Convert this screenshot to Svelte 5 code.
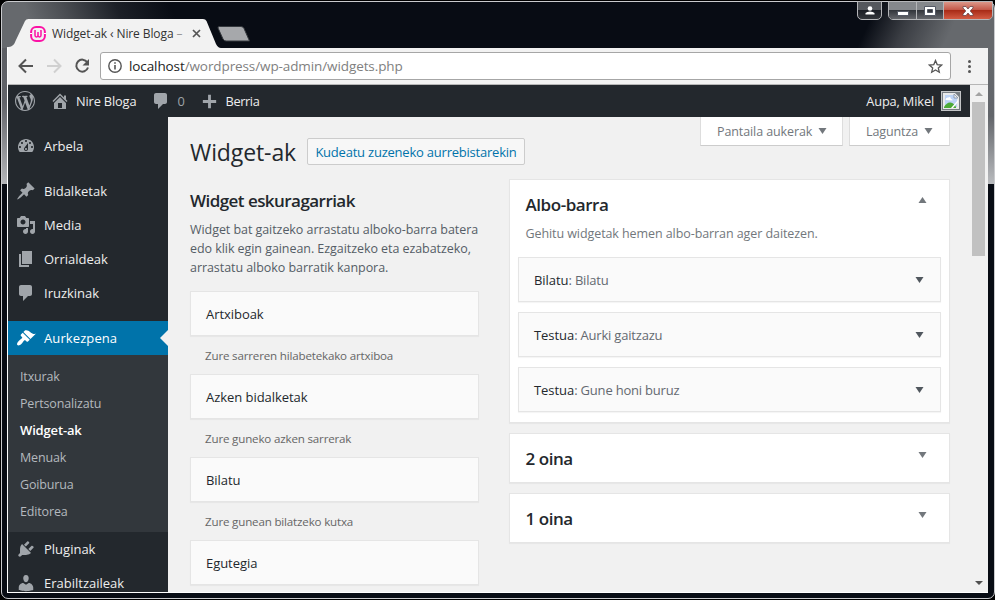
<script>
  const icons = {
    wordpress: 'M20 10c0-5.51-4.49-10-10-10C4.48 0 0 4.49 0 10c0 5.52 4.48 10 10 10 5.51 0 10-4.48 10-10zM7.78 15.37L4.37 6.22c.55-.02 1.17-.08 1.17-.08.5-.06.44-1.13-.06-1.11 0 0-1.45.11-2.37.11-.18 0-.37 0-.58-.01C4.12 2.69 6.87 1.11 10 1.11c2.33 0 4.45.87 6.05 2.34-.68-.11-1.65.39-1.65 1.58 0 .74.45 1.36.9 2.1.35.61.55 1.36.55 2.46 0 1.49-1.4 5-1.4 5l-3.03-8.37c.54-.02.82-.17.82-.17.5-.05.44-1.25-.06-1.22 0 0-1.44.12-2.38.12-.87 0-2.33-.12-2.33-.12-.5-.03-.56 1.2-.06 1.22l.92.08 1.26 3.41zM17.41 10c.24-.64.74-1.87.43-4.25.7 1.29 1.05 2.71 1.05 4.25 0 3.29-1.73 6.24-4.4 7.78.97-2.59 1.94-5.2 2.92-7.78zM6.1 18.09C3.12 16.65 1.11 13.53 1.11 10c0-1.3.23-2.48.72-3.59C3.25 10.3 4.67 14.2 6.1 18.09zm4.03-6.63l2.58 6.98c-.86.29-1.76.45-2.71.45-.79 0-1.57-.11-2.29-.33.81-2.38 1.62-4.74 2.42-7.1z',
    home: 'M16 8.5l1.53 1.53-1.06 1.06L10 4.6l-6.47 6.49-1.06-1.06L10 2.5l4 4v-2h2v4zm-6-2.46l6 5.99V18H4v-5.97zM12 17v-5H8v5h4z',
    comment: 'M5 2h9c1.1 0 2 .9 2 2v7c0 1.1-.9 2-2 2h-2l-5 5v-5H5c-1.1 0-2-.9-2-2V4c0-1.1.9-2 2-2z',
    plus: 'M17 8.5v3h-5.500v5.500h-3v-5.500H3v-3h5.500V3h3v5.500H17z',
    dashboard: 'M3.760 16h12.480c1.100-1.370 1.760-3.110 1.760-5 0-4.420-3.580-8-8-8s-8 3.580-8 8c0 1.890.66 3.630 1.760 5zM10 4c.55 0 1 .45 1 1s-.45 1-1 1-1-.45-1-1 .45-1 1-1zM6 6c.55 0 1 .45 1 1s-.45 1-1 1-1-.45-1-1 .45-1 1-1zm8 0c.55 0 1 .45 1 1s-.45 1-1 1-1-.45-1-1 .45-1 1-1zm-5.370 5.550L12 7v6c0 1.100-.9 2-2 2s-2-.9-2-2c0-.57.24-1.080.63-1.450zM4 10c.55 0 1 .45 1 1s-.45 1-1 1-1-.45-1-1 .45-1 1-1zm12 0c.55 0 1 .45 1 1s-.45 1-1 1-1-.45-1-1 .45-1 1-1zm-5 3c0-.55-.45-1-1-1s-1 .45-1 1 .45 1 1 1 1-.45 1-1z',
    pin: 'M10.440 3.020l1.820-1.820 6.360 6.350-1.830 1.820c-1.050-.68-2.480-.57-3.410.36l-.75.75c-.92.93-1.040 2.350-.35 3.410l-1.830 1.820-2.410-2.410-2.800 2.790c-.42.42-3.380 2.710-3.800 2.290s1.860-3.390 2.280-3.810l2.790-2.790L4.100 9.360l1.830-1.820c1.050.69 2.480.57 3.400-.36l.75-.75c.93-.92 1.050-2.350.36-3.410z',
    media: 'M13 11V4c0-.55-.45-1-1-1h-1.670L9 1H5L3.670 3H2c-.55 0-1 .45-1 1v7c0 .55.45 1 1 1h10c.55 0 1-.45 1-1zM7 4.500c1.380 0 2.500 1.120 2.500 2.500S8.380 9.500 7 9.500 4.500 8.380 4.500 7 5.620 4.500 7 4.500zM14 6h5v10.500c0 1.380-1.120 2.500-2.500 2.500S14 17.880 14 16.500s1.120-2.500 2.500-2.500c.17 0 .34.02.5.05V9h-3V6zm-4 8.050V13h2v3.500c0 1.380-1.120 2.500-2.500 2.500S7 17.880 7 16.500 8.120 14 9.500 14c.17 0 .34.02.5.05z',
    page: 'M6 15V2h10v13H6zm-1 1h8v2H3V5h2v11z',
    brush: 'M14.480 11.060L7.410 3.990l1.500-1.500c.5-.56 2.300-.47 3.510.32 1.210.8 1.430 1.280 2.910 2.100 1.180.64 2.450 1.260 4.450.85zm-.71.71L6.700 4.700 4.930 6.470c-.39.39-.39 1.020 0 1.410l1.060 1.060c.39.39.39 1.030 0 1.420-.6.6-1.430 1.110-2.210 1.690-.35.26-.7.53-1.010.84C1.430 14.230.4 16.080 1.400 17.070c.99 1 2.840-.03 4.180-1.360.31-.31.58-.66.85-1.020.57-.78 1.080-1.610 1.690-2.210.39-.39 1.020-.39 1.410 0l1.060 1.060c.39.39 1.020.39 1.410 0z',
    plug: 'M13.110 4.360L9.870 7.600 8 5.730l3.240-3.240c.35-.34 1.050-.2 1.560.32.52.51.66 1.210.31 1.550zm-8 1.770l.91-1.120 9.010 9.010-1.190.84c-.71.71-2.630 1.160-3.820 1.160H6.140L4.900 17.260c-.59.59-1.540.59-2.120 0-.59-.58-.59-1.530 0-2.120l1.240-1.240v-3.880c0-1.130.4-3.190 1.090-3.890zm7.260 3.970l3.240-3.240c.34-.35 1.040-.21 1.550.31.52.51.66 1.210.31 1.550l-3.240 3.250z',
    user: 'M10 9.250c-2.270 0-2.730-3.440-2.730-3.440C7 4.020 7.820 2 9.970 2c2.160 0 2.980 2.020 2.710 3.810 0 0-.41 3.440-2.680 3.440zm0 2.570L12.720 10c2.390 0 4.520 2.330 4.520 4.530v2.490s-3.650 1.130-7.240 1.130c-3.650 0-7.240-1.130-7.240-1.130v-2.490c0-2.250 1.940-4.480 4.470-4.480z'
  };
  const menuTop = [
    ['pin', 'Bidalketak'], ['media', 'Media'], ['page', 'Orrialdeak'], ['comment', 'Iruzkinak']
  ];
  const submenu = ['Itxurak', 'Pertsonalizatu', 'Widget-ak', 'Menuak', 'Goiburua', 'Editorea'];
  const menuBottom = [['plug', 'Pluginak'], ['user', 'Erabiltzaileak']];
  const available = [
    ['Artxiboak', 'Zure sarreren hilabetekako artxiboa'],
    ['Azken bidalketak', 'Zure guneko azken sarrerak'],
    ['Bilatu', 'Zure gunean bilatzeko kutxa'],
    ['Egutegia', '']
  ];
  const placed = [['Bilatu', 'Bilatu'], ['Testua', 'Aurki gaitzazu'], ['Testua', 'Gune honi buruz']];
  const closed = ['2 oina', '1 oina'];
</script>

{#snippet icon(name, size = 20)}
  <svg class="icon" width={size} height={size} viewBox="0 0 20 20"><path fill-rule="evenodd" d={icons[name]} /></svg>
{/snippet}

{#snippet arrow(up = false)}
  <svg class="arrow" width="9" height="6" viewBox="0 0 9 6"><path d={up ? 'M.5 6h8L4.5 0z' : 'M.5 0h8L4.5 6z'} /></svg>
{/snippet}

{#snippet menuItem([name, label])}
  <a class="item" href="#menu">{@render icon(name)}<span>{label}</span></a>
{/snippet}

<div class="window">
  <div class="edge"></div>
  <header class="titlebar">
    <div class="tab">
      <svg class="tabshape" width="214" height="29" viewBox="0 0 214 29"><path d="M0 29V28C5 28 7 26 8.500 22L18 2Q19 0 21.500 0H196Q198.500 0 199.500 2L209 25Q211 29 214 29Z" fill="#f2f2f2" /></svg>
      <svg class="favicon" width="16" height="16" viewBox="0 0 16 16"><rect x="1.100" y="1.100" width="13.800" height="13.800" rx="5" fill="none" stroke="#fb12a5" stroke-width="2" /><path d="M5 5v4.300q0 1.700 1.500 1.700T8 9.300V6M8 9.300q0 1.700 1.500 1.700T11 9.300V5M4.300 4.800h1.500M10.200 4.800h1.500" fill="none" stroke="#fb12a5" stroke-width="1.500" /><path d="M0 7.500h2M14 7.500h2" stroke="#fff" stroke-width="1" /></svg>
      <span class="tabtitle">Widget-ak ‹ Nire Bloga <i>–</i></span>
      <svg class="tabclose" width="9" height="9" viewBox="0 0 9 9"><path d="M1 1l7 7M8 1L1 8" stroke="#555" stroke-width="1.700" /></svg>
    </div>
    <svg class="newtab" width="34" height="16" viewBox="0 0 34 16"><path d="M2.500.5H24Q26 .5 27 2.500L32.500 15H9Q7 15 6 13L1 2Q.5.5 2.500.5Z" fill="#a6a8ab" stroke="#34383d" /></svg>
    <div class="controls">
      <div class="profile">
        <svg width="10" height="9" viewBox="0 0 10 9"><circle cx="5" cy="2.500" r="2.300" fill="#fff" /><path d="M.5 8.500V7Q2 5.500 5 5.500T9.500 7V8.500Z" fill="#fff" /></svg>
      </div>
      <div class="group">
        <span class="min"><svg width="12" height="5" viewBox="0 0 12 5"><rect x=".5" y=".5" width="11" height="4" fill="#fff" stroke="#555a66" /></svg></span>
        <span class="max"><svg width="12" height="10" viewBox="0 0 12 10"><path d="M.5.5h11v9H.5zM3.500 3.500v3h5v-3z" fill="#fff" fill-rule="evenodd" stroke="#555a66" /></svg></span>
        <span class="close"><svg width="12" height="10" viewBox="0 0 12 10"><path d="M1 .5h3L6 3 8 .5h3V2L8.200 5 11 8v1.500H8L6 7 4 9.500H1V8L3.800 5 1 2z" fill="#fff" stroke="#69464a" stroke-width=".8" /></svg></span>
      </div>
    </div>
  </header>

  <main class="client">
    <nav class="toolbar">
      <svg width="16" height="16" viewBox="0 0 16 16"><path d="M15 8H2M8 1.500L1.500 8 8 14.500" fill="none" stroke="#555" stroke-width="2" /></svg>
      <svg width="16" height="16" viewBox="0 0 16 16"><path d="M1 8h13M8 1.500L14.500 8 8 14.500" fill="none" stroke="#d0d0d0" stroke-width="2" /></svg>
      <svg width="16" height="16" viewBox="0 0 16 16"><path d="M13.300 4.300A6 6 0 1 0 14 9.500" fill="none" stroke="#555" stroke-width="2" /><path d="M15 1v6.500H8.500z" fill="#555" /></svg>
      <div class="url">
        <svg width="14" height="14" viewBox="0 0 14 14"><circle cx="7" cy="7" r="6.200" fill="none" stroke="#555" stroke-width="1.400" /><path d="M7 6v4.500M7 3.200v1.600" stroke="#555" stroke-width="1.600" /></svg>
        <span class="address"><b>localhost</b>/wordpress/wp-admin/widgets.php</span>
        <svg class="star" width="15" height="15" viewBox="0 0 15 15"><path d="M7.500 1.500l1.700 4.100 4.400.4-3.300 2.900 1 4.300-3.800-2.300-3.800 2.300 1-4.300L1.400 6l4.400-.4z" fill="none" stroke="#555" stroke-width="1.300" /></svg>
      </div>
      <svg class="kebab" width="3" height="13" viewBox="0 0 3 13"><circle cx="1.500" cy="1.500" r="1.500" /><circle cx="1.500" cy="6.500" r="1.500" /><circle cx="1.500" cy="11.500" r="1.500" /></svg>
    </nav>

    <div class="page">
      <div class="document">
        <div class="adminbar">
          {@render icon('wordpress')}
          <span class="entry site">{@render icon('home')}<span>Nire Bloga</span></span>
          <span class="entry comments">{@render icon('comment')}<span>0</span></span>
          <span class="entry new">{@render icon('plus', 19)}<span>Berria</span></span>
          <span class="greeting">Aupa, Mikel</span>
          <svg class="avatar" width="20" height="20" viewBox="0 0 20 20"><rect x=".5" y=".5" width="19" height="19" fill="#777d82" stroke="#c3c5c7" /><path d="M2 2h12l4 4v12H2z" fill="#e9eaeb" /><path d="M4 4h9v3h3v9H4z" fill="#bdd3f5" /><path d="M4.500 9q0-3 3-2.500Q9.500 5 10 8q2 0 1.500 1.500z" fill="#fff" /><path d="M3 16q3-5 6.500-4.500T15 16v1H3z" fill="#4baa37" /><path d="M10 17l7-8v2l-5 6z" fill="#fff" /><path d="M13 3v4h4z" fill="#eee" stroke="#8290a3" stroke-width=".8" /></svg>
        </div>
        <div class="body">
          <aside class="sidebar">
            {@render menuItem(['dashboard', 'Arbela'])}
            <div class="separator"></div>
            {#each menuTop as entry}{@render menuItem(entry)}{/each}
            <div class="separator"></div>
            <div class="current">{@render menuItem(['brush', 'Aurkezpena'])}</div>
            <div class="submenu">
              {#each submenu as label}<a href="#sub" class:selected={label === 'Widget-ak'}>{label}</a>{/each}
            </div>
            {#each menuBottom as entry}{@render menuItem(entry)}{/each}
          </aside>

          <section class="content">
            <div class="heading">
              <h1>Widget-ak</h1>
              <a class="button" href="#customize">Kudeatu zuzeneko aurrebistarekin</a>
              <div class="metalinks">
                <span class="options">Pantaila aukerak {@render arrow()}</span>
                <span class="help">Laguntza {@render arrow()}</span>
              </div>
            </div>
            <div class="columns">
              <div class="left">
                <h2>Widget eskuragarriak</h2>
                <p class="intro">Widget bat gaitzeko arrastatu alboko-barra batera<br />edo klik egin gainean. Ezgaitzeko eta ezabatzeko,<br />arrastatu alboko barratik kanpora.</p>
                {#each available as [title, text]}
                  <div class="widget">{title}</div>
                  <p class="description">{text}</p>
                {/each}
              </div>
              <div class="right">
                <div class="panel open">
                  <div class="panelhead"><h2>Albo-barra</h2>{@render arrow(true)}</div>
                  <p>Gehitu widgetak hemen albo-barran ager daitezen.</p>
                  {#each placed as [kind, name]}
                    <div class="widget"><span>{kind}<i>: {name}</i></span>{@render arrow()}</div>
                  {/each}
                </div>
                {#each closed as title}
                  <div class="panel"><div class="panelhead"><h2>{title}</h2>{@render arrow()}</div></div>
                {/each}
              </div>
            </div>
          </section>
        </div>
      </div>
      <div class="scrollbar">
        <svg width="9" height="4" viewBox="0 0 9 4"><path d="M0 4h8L4 0z" fill="#a3a3a3" /></svg>
        <div class="thumb"></div>
        <svg class="down" width="8" height="4" viewBox="0 0 8 4"><path d="M0 0h8L4 4z" fill="#505050" /></svg>
      </div>
    </div>
  </main>
</div>

<style>
  :global(body) { margin: 0; background: #000; }
  * { box-sizing: border-box; }
  h1, h2, p { margin: 0; font-weight: 400; }
  a { color: inherit; text-decoration: none; }
  svg { display: block; flex: none; }
  .window {
    position: relative; width: 995px; height: 600px; overflow: hidden;
    display: flex; flex-direction: column; padding: 0 7px 2px 7px;
    font-family: "Open Sans", "Noto Sans", sans-serif; font-size: 13px; line-height: 18px;
    background: #000;
  }
  .edge {
    position: absolute; inset: 1px 0 1px 1px; border: 1px solid #c9cacd; border-radius: 7px; pointer-events: none;
    background:
      linear-gradient(180deg, #5c5e63, #62646a 40%, #b4b6b9) 0 46px / 6px 136px no-repeat,
      linear-gradient(180deg, #66696d, #62656a 50%, #b9bbbe) 100% 46px / 6px 136px no-repeat,
      linear-gradient(68deg, #66696d 18%, #4b4e53 35%, #1c2027 60%, transparent 85%) 0 0 / 200px 46px no-repeat,
      linear-gradient(115deg, transparent 20%, #3a3d43 42%, #66696d 70%) 100% 0 / 150px 46px no-repeat,
      #080c14;
  }
  .titlebar { position: relative; height: 48px; flex: none; display: flex; align-items: flex-end; }
  .tab { position: relative; width: 214px; height: 29px; display: flex; align-items: center; padding-left: 23px; }
  .tabshape { position: absolute; left: 0; top: 0; }
  .favicon { position: relative; }
  .tabtitle { position: relative; width: 134px; margin-left: 6px; white-space: nowrap; color: #333; font-size: 12px; letter-spacing: -.1px; }
  .tabtitle i { font-style: normal; color: #999; }
  .tabclose { position: relative; margin-left: 6px; }
  .newtab { margin: 0 0 6px -4px; }
  .controls { margin: 0 -5px 0 auto; align-self: flex-start; display: flex; gap: 6px; padding-top: 1px; }
  .profile, .group { height: 19px; border: 1px solid #b5b6b9; border-radius: 0 0 5px 5px; overflow: hidden; display: flex; }
  .profile { width: 25px; align-items: center; justify-content: center; background: linear-gradient(#55585d 45%, #1b1e25 50%, #33363b); }
  .group { width: 105px; }
  .group span { display: flex; align-items: center; justify-content: center; width: 28px; border-right: 1px solid #b5b6b9; background: linear-gradient(#85888c 45%, #33363c 50%, #64666b); }
  .group .max { width: 27px; }
  .group .close { flex: 1; border: 0; background: linear-gradient(#dc9789 0, #c4594a 45%, #a92c18 50%, #d35b43); }
  .group .min svg { margin-top: 5px; }
  .client { position: relative; flex: none; width: 981px; height: 545px; border-left: 1px solid #fff; border-bottom: 1px solid #fff; display: flex; flex-direction: column; background: #f2f2f2; }
  .toolbar { height: 37px; flex: none; display: flex; align-items: center; padding-left: 10px; gap: 12px; border-bottom: 1px solid #b6b6b6; }
  .url { display: flex; align-items: center; width: 851px; height: 28px; margin-left: -2px; padding: 0 7px; border: 1px solid #a6a6a6; border-radius: 3px; background: #fff; }
  .address { margin-left: 7px; font-size: 13.5px; letter-spacing: -.1px; color: #808080; }
  .address b { font-weight: 400; color: #222; }
  .star { margin-left: auto; }
  .kebab { margin-left: 5px; fill: #555; }
  .page { flex: 1; min-height: 0; display: flex; }
  .document { width: 962px; display: flex; flex-direction: column; background: #f1f1f1; overflow: hidden; }
  .adminbar { height: 32px; flex: none; display: flex; align-items: center; padding: 0 9px 0 7px; color: #eee; background: #23282d; font-size: 12.8px; letter-spacing: -.15px; }
  .icon { fill: #a0a5aa; }
  .entry { display: flex; align-items: center; }
  .site { margin-left: 15px; }
  .site span { margin-left: 6px; }
  .comments { margin-left: 15px; }
  .comments span { margin-left: 6px; color: #9ea3a8; }
  .new { margin-left: 15px; }
  .new span { margin-left: 7px; letter-spacing: -.4px; }
  .greeting { margin-left: auto; margin-right: 7px; }
  .body { flex: 1; min-height: 0; display: flex; overflow: hidden; }
  .sidebar { width: 160px; flex: none; padding-top: 12px; color: #eee; background: #23282d; overflow: hidden; }
  .item { display: flex; align-items: center; height: 34px; padding-left: 8px; }
  .item span { margin-left: 8px; }
  .separator { height: 11px; }
  .current { position: relative; color: #fff; background: #0073aa; letter-spacing: .1px; }
  .current .icon { fill: #fff; }
  .current::after { content: ""; position: absolute; right: 0; top: 9px; border: 8px solid transparent; border-left: 0; border-right-color: #f1f1f1; }
  .submenu { padding: 8px 0 7px 12px; height: 177px; background: #32373c; color: #b4b9be; font-size: 12.5px; letter-spacing: -.15px; }
  .submenu a { display: block; line-height: 27px; }
  .submenu .selected { color: #fff; font-weight: 600; font-size: 13px; }
  .content { flex: 1; padding: 0 20px 0 22px; color: #23282d; }
  .heading { display: flex; height: 62px; align-items: flex-start; }
  h1 { padding-top: 20px; width: 117px; font-size: 23px; line-height: 30px; letter-spacing: -.1px; white-space: nowrap; }
  .button { width: 218px; height: 27px; margin-top: 21px; border: 1px solid #ccc; border-radius: 2px; background: #f7f7f7; color: #0073aa; font-weight: 500; letter-spacing: -.22px; line-height: 26px; text-align: center; white-space: nowrap; }
  .metalinks { margin-left: auto; display: flex; gap: 6px; }
  .metalinks span { height: 29px; border: 1px solid #ddd; border-top: 0; border-bottom-color: #ccc; background: #fff; color: #72777c; display: flex; align-items: center; padding: 1px 0 0 16px; white-space: nowrap; font-size: 12.5px; letter-spacing: -.1px; }
  .metalinks .options { width: 143px; }
  .metalinks .help { width: 101px; }
  .metalinks .arrow { margin: -1px 0 0 6px; }
  .arrow { fill: #72777c; }
  .columns { display: flex; justify-content: space-between; }
  .left { width: 289px; }
  .left h2 { padding-top: 10px; line-height: 24px; font-size: 17px; font-weight: 600; letter-spacing: -.55px; white-space: nowrap; }
  .intro { margin: 7px 0 14px; line-height: 19px; font-size: 12.5px; letter-spacing: -.06px; color: #555d66; white-space: nowrap; }
  .widget { display: flex; align-items: center; justify-content: space-between; height: 45px; padding: 0 16px 0 15px; border: 1px solid #e5e5e5; background: #fafafa; box-shadow: 0 1px 1px rgba(0,0,0,.04); font-weight: 500; color: #23282d; letter-spacing: -.05px; }
  .description { height: 38px; padding: 11px 14px 0 15px; font-size: 11.6px; letter-spacing: -.18px; color: #666; }
  .right { width: 441px; }
  .panel { height: 50px; margin-bottom: 10px; padding: 0 8px; border: 1px solid #e5e5e5; background: #fff; box-shadow: 0 1px 1px rgba(0,0,0,.04); }
  .panel.open { height: 244px; }
  .panelhead { display: flex; justify-content: space-between; padding: 13px 14px 0 7.5px; height: 42px; }
  .panelhead h2 { font-size: 17px; line-height: 24px; font-weight: 600; letter-spacing: -.45px; }
  .panelhead .arrow { margin-top: 5px; }
  .open .panelhead .arrow { margin-top: 4px; }
  .panel p { padding: 1px 0 0 7.5px; height: 35px; line-height: 22px; font-size: 12.5px; letter-spacing: -.08px; color: #72777c; }
  .panel .widget { margin-bottom: 10px; }
  .panel i { font-style: normal; color: #646970; letter-spacing: -.2px; }
  .panel .widget .arrow { fill: #50575e; }
  .scrollbar { width: 18px; padding: 7px 0 0 2px; display: flex; flex-direction: column; background: #f1f1f1; }
  .scrollbar svg { margin-left: 3px; }
  .thumb { width: 13px; height: 154px; margin-top: 6px; background: #c1c1c1; }
  .scrollbar .down { margin-top: auto; margin-bottom: 7px; }
</style>
